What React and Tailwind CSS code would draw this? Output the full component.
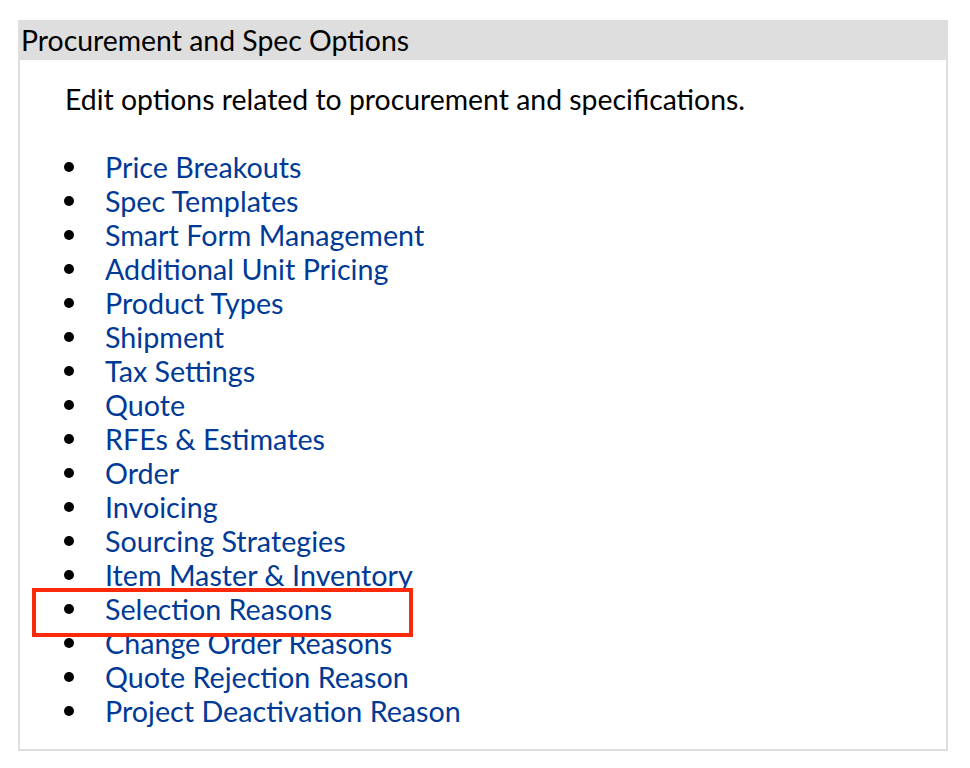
import React from "react";

const links = [
  "Price Breakouts",
  "Spec Templates",
  "Smart Form Management",
  "Additional Unit Pricing",
  "Product Types",
  "Shipment",
  "Tax Settings",
  "Quote",
  "RFEs & Estimates",
  "Order",
  "Invoicing",
  "Sourcing Strategies",
  "Item Master & Inventory",
  "Selection Reasons",
  "Change Order Reasons",
  "Quote Rejection Reason",
  "Project Deactivation Reason",
];

const App = () => {
  return (
    <div className="w-[970px] h-[768px] bg-white pt-[20px] pl-[18px] font-['Lato',sans-serif] text-black">
      <div className="relative w-[930px] border-2 border-t-0 border-[#dedede]">
        <div className="-mx-[2px] h-[40px] bg-[#dedede] pl-[3px] text-[28.4px] leading-[40px]">
          Procurement and Spec Options
        </div>
        <div className="pl-[44px] pt-[22px] pb-[21px]">
          <p className="pl-[1px] text-[28.4px] leading-[34px]">
            Edit options related to procurement and specifications.
          </p>
          <ul className="mt-[34px] text-[28.7px] leading-[34px]">
            {links.map((name, i) => (
              <li key={i} className="flex h-[34px] items-center">
                <span className="h-[10px] w-[10px] shrink-0 rounded-full bg-black"></span>
                <a href="#" className="ml-[31px] text-[#003a96]">
                  {name}
                </a>
              </li>
            ))}
          </ul>
        </div>
        {/* highlight around "Selection Reasons" */}
        <div className="absolute left-[12px] top-[568px] h-[49px] w-[381px] border-[4px] border-[#fa2a0a]"></div>
      </div>
    </div>
  );
};

export default App;
